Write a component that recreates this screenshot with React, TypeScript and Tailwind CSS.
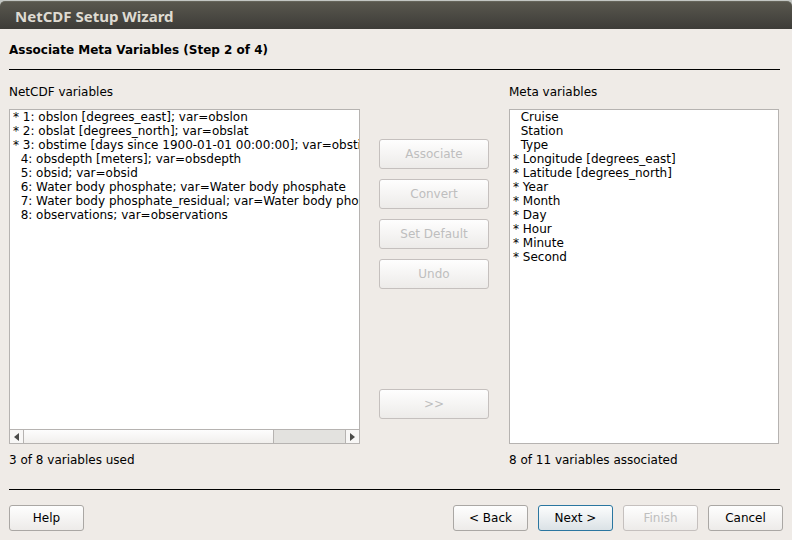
import { useState } from "react";
import type { ButtonHTMLAttributes } from "react";
import { clsx } from "clsx";

const netcdfVariables = [
  "* 1: obslon [degrees_east]; var=obslon",
  "* 2: obslat [degrees_north]; var=obslat",
  "* 3: obstime [days since 1900-01-01 00:00:00]; var=obstime",
  "  4: obsdepth [meters]; var=obsdepth",
  "  5: obsid; var=obsid",
  "  6: Water body phosphate; var=Water body phosphate",
  "  7: Water body phosphate_residual; var=Water body phosphate_residual",
  "  8: observations; var=observations",
];

const metaVariables = [
  "  Cruise",
  "  Station",
  "  Type",
  "* Longitude [degrees_east]",
  "* Latitude [degrees_north]",
  "* Year",
  "* Month",
  "* Day",
  "* Hour",
  "* Minute",
  "* Second",
];

type PushButtonProps = ButtonHTMLAttributes<HTMLButtonElement> & {
  primary?: boolean;
  wide?: boolean;
};

function PushButton({ primary, wide, disabled, ...rest }: PushButtonProps) {
  return (
    <button
      type="button"
      disabled={disabled}
      className={clsx(
        "flex items-center justify-center rounded-[3px] border bg-linear-to-b",
        wide ? "h-[30px] w-full" : "h-[26px] w-[75px]",
        primary
          ? "border-[#2a76a0] from-[#fcfdfd] to-[#dbe2e6]"
          : disabled
            ? "border-[#c5c0be] from-[#fefefe] to-[#edebe9] text-[#bebebe]"
            : "border-[#aaa7a4] from-[#fefefe] to-[#edebe9]",
      )}
      {...rest}
    />
  );
}

function VariableList({ labelId, items }: { labelId: string; items: string[] }) {
  const [selected, setSelected] = useState<number | null>(null);
  return (
    <ul
      role="listbox"
      aria-labelledby={labelId}
      className="min-h-0 flex-1 overflow-hidden leading-[14px]"
    >
      {items.map((item, i) => (
        <li
          key={item}
          role="option"
          aria-selected={selected === i}
          onClick={() => setSelected(i)}
          className={clsx(
            "overflow-hidden pl-[3px] whitespace-pre",
            selected === i && "bg-[#308cc6] text-white",
          )}
        >
          {item}
        </li>
      ))}
    </ul>
  );
}

function HorizontalScrollbar() {
  return (
    <div className="flex h-[14px] shrink-0 border-t border-[#b6b3b1] bg-[#e3e2df]">
      <button
        type="button"
        aria-label="Scroll left"
        className="flex w-[14px] items-center justify-center border-r border-[#b6b3b1] bg-[#f8f7f6]"
      >
        <svg width="5" height="8" viewBox="0 0 5 8" fill="#4b4b49" aria-hidden="true">
          <path d="M5 0v8L0 4z" />
        </svg>
      </button>
      <div className="flex flex-1">
        <div className="w-[78%] border-r border-[#b6b3b1] bg-linear-to-b from-[#fdfdfd] to-[#f1efed]" />
      </div>
      <button
        type="button"
        aria-label="Scroll right"
        className="flex w-[14px] items-center justify-center border-l border-[#b6b3b1] bg-[#f8f7f6]"
      >
        <svg width="5" height="8" viewBox="0 0 5 8" fill="#4b4b49" aria-hidden="true">
          <path d="M0 0v8l5-4z" />
        </svg>
      </button>
    </div>
  );
}

export default function App() {
  return (
    <div className="flex min-h-screen flex-col bg-[#efebe7] font-['DejaVu_Sans',sans-serif] text-[12px] leading-[18px] text-black">
      <header className="bg-[#c3c6c3] pt-px">
        <div className="flex h-7 items-center rounded-t-[5px] border-t border-[#66655b] bg-linear-to-b from-[#59574e] to-[#3d3c38] px-[15px]">
          <h1 className="font-['Noto_Sans','Open_Sans',sans-serif] text-[15px] font-bold text-[#dfdbd2]">
            NetCDF Setup Wizard
          </h1>
        </div>
      </header>

      <main className="flex flex-1 flex-col pl-[9px]">
        <h2 className="mr-3 border-b border-black pt-3 pb-[10px] font-bold">
          Associate Meta Variables (Step 2 of 4)
        </h2>

        <div className="mr-[13px] flex flex-1 pt-[13px]">
          <section className="flex min-w-0 flex-[351_1_0px] flex-col">
            <h3 id="netcdf-label">NetCDF variables</h3>
            <div className="mt-2 flex flex-1 flex-col border border-[#b6b3b1] bg-white">
              <VariableList labelId="netcdf-label" items={netcdfVariables} />
              <HorizontalScrollbar />
            </div>
            <p className="mt-[7px]">3 of 8 variables used</p>
          </section>

          <div className="mr-5 ml-[19px] flex w-[110px] shrink-0 flex-col gap-[10px] pt-14 pb-[50px]">
            <PushButton wide disabled>Associate</PushButton>
            <PushButton wide disabled>Convert</PushButton>
            <PushButton wide disabled>Set Default</PushButton>
            <PushButton wide disabled>Undo</PushButton>
            <div className="mt-auto">
              <PushButton wide disabled>&gt;&gt;</PushButton>
            </div>
          </div>

          <section className="flex min-w-0 flex-[270_1_0px] flex-col">
            <h3 id="meta-label">Meta variables</h3>
            <div className="mt-2 flex flex-1 flex-col border border-[#b6b3b1] bg-white">
              <VariableList labelId="meta-label" items={metaVariables} />
            </div>
            <p className="mt-[7px]">8 of 11 variables associated</p>
          </section>
        </div>

        <hr className="mt-5 mr-3 border-black" />
      </main>

      <footer className="flex gap-[10px] pt-[15px] pr-[9px] pb-[9px] pl-[9px]">
        <PushButton>Help</PushButton>
        <div className="ml-auto flex gap-[10px]">
          <PushButton>&lt; Back</PushButton>
          <PushButton primary>Next &gt;</PushButton>
          <PushButton disabled>Finish</PushButton>
          <PushButton>Cancel</PushButton>
        </div>
      </footer>
    </div>
  );
}
